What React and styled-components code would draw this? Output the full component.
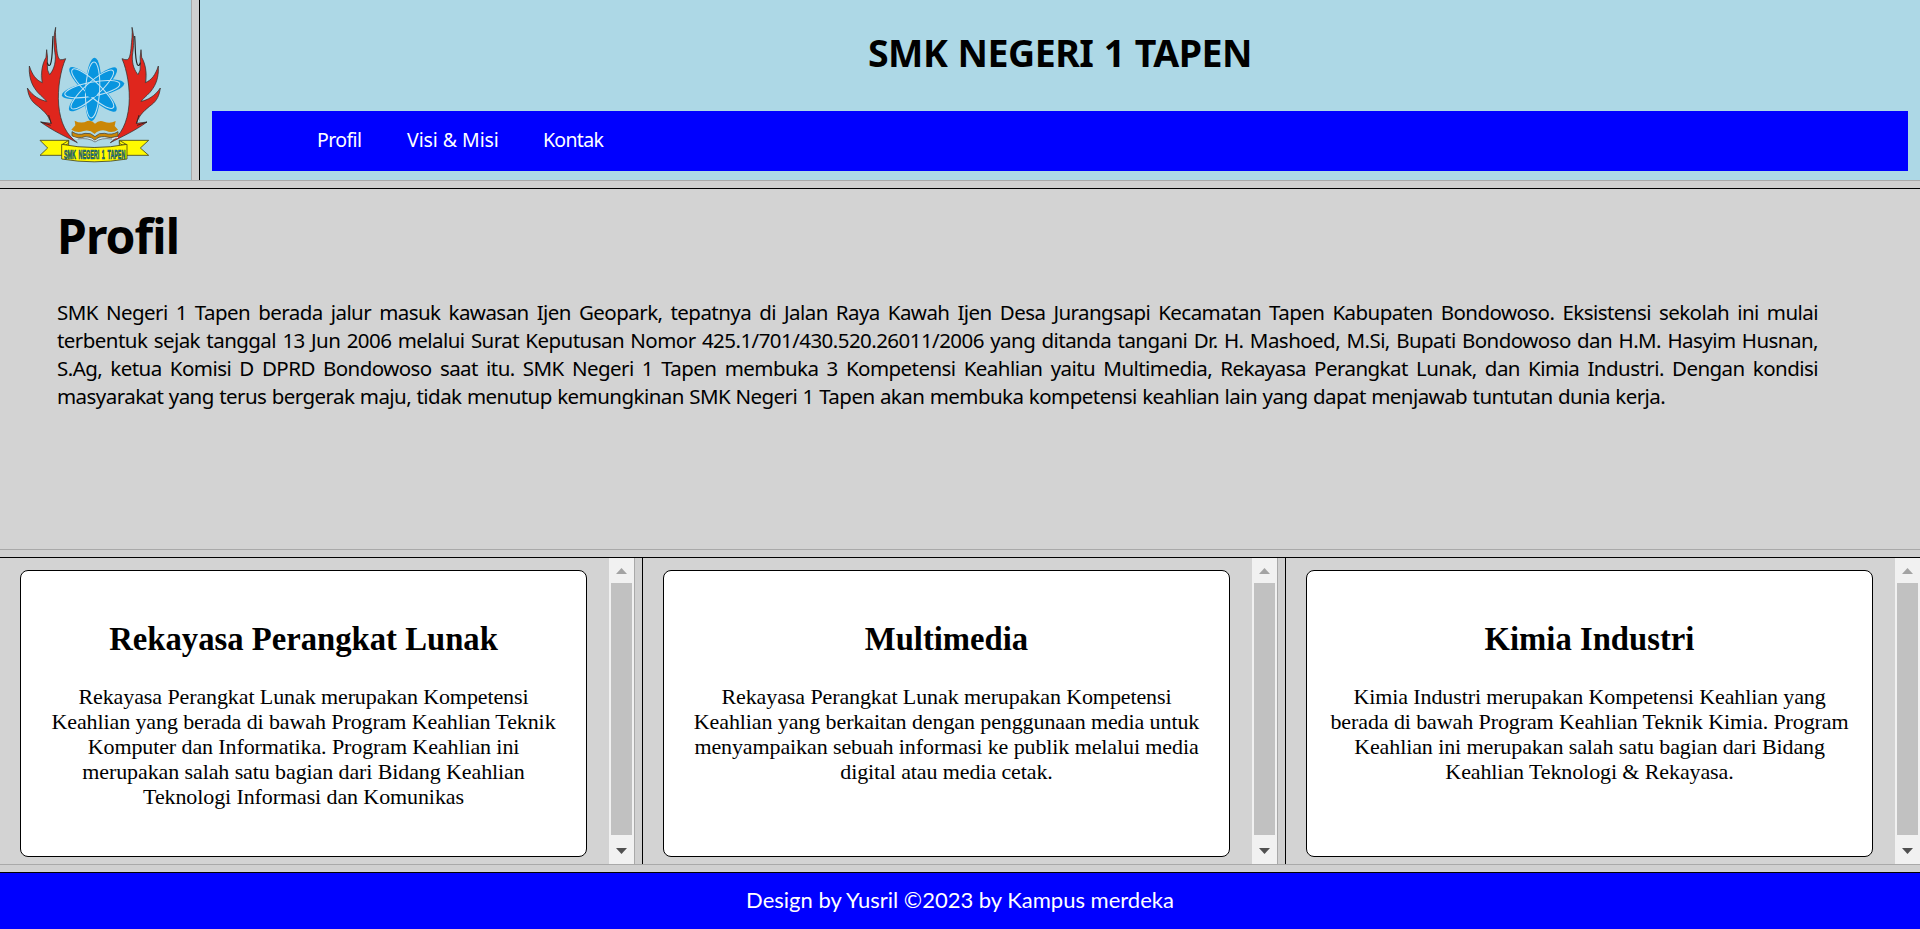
import React from "react";
import styled, { createGlobalStyle } from "styled-components";

const GlobalStyle = createGlobalStyle`
  * { box-sizing: border-box; }
  html, body, #root { height: 100%; margin: 0; }
  body { overflow: hidden; background: #d3d3d3; color: #000; }
`;

const Page = styled.div`
  display: grid;
  grid-template-rows: 180px 9px 360px 9px 306px 9px 56px;
  height: 929px;
  width: 1920px;
`;

const RowDivider = styled.div`
  background: #d0d0d0;
  border-top: 1px solid #a9a9a9;
  border-bottom: 1px solid #000;
`;

const ColumnDivider = styled.div`
  background: #d0d0d0;
  border-left: 1px solid #a9a9a9;
  border-right: 1px solid #000;
`;

const Header = styled.header`
  display: grid;
  grid-template-columns: 191px 9px 1fr;
  background: #add8e6;
`;

const LogoPane = styled.div`
  padding: 20px;
`;

const Logo = styled.svg`
  display: block;
  width: 146px;
  height: 146px;
  overflow: visible;
`;

const Banner = styled.div`
  display: flex;
  flex-direction: column;
  padding: 26px 12px 0;
`;

const SchoolName = styled.h1`
  margin: 0;
  height: 85px;
  text-align: center;
  font: 700 37.5px/54px "Noto Sans", "Open Sans", sans-serif;
  white-space: nowrap;
  letter-spacing: -0.5px;
  word-spacing: 1px;
`;

const Nav = styled.nav`
  display: flex;
  gap: 45px;
  height: 60px;
  padding-left: 105px;
  background: #00f;
`;

const NavLink = styled.a`
  width: ${(p) => p.$width}px;
  color: #fff;
  font: 400 19.5px/58px "Noto Sans", "Open Sans", sans-serif;
  letter-spacing: ${(p) => p.$tracking}px;
  white-space: nowrap;
`;

const Profile = styled.main`
  padding: 15px 102px 0 57px;
  font-family: "Noto Sans", "Open Sans", sans-serif;
`;

const ProfileTitle = styled.h2`
  margin: 0;
  font-size: 48px;
  line-height: 64px;
  letter-spacing: -0.9px;
`;

const ProfileText = styled.p`
  margin: 30px 0 0;
  font-size: 20.5px;
  line-height: 28px;
  letter-spacing: -0.55px;
  word-spacing: 0.6px;
`;

const Line = styled.span`
  display: block;
  white-space: nowrap;
  text-align-last: ${(p) => (p.$last ? "left" : "justify")};
`;

const Programs = styled.section`
  display: grid;
  grid-template-columns: 634px 9px 634px 9px 634px;
`;

const ProgramPane = styled.div`
  display: flex;
  justify-content: space-between;
  padding-left: 20px;
`;

const Card = styled.article`
  width: 567px;
  height: 287px;
  margin-top: 12px;
  padding: 49px 0 0;
  border: 1px solid #000;
  border-radius: 8px;
  background: #fff;
  text-align: center;
  font-family: "Liberation Serif", serif;
`;

const CardTitle = styled.h2`
  margin: 0 0 26px;
  font-size: 32.7px;
  line-height: 38px;
`;

const CardText = styled.p`
  margin: 0;
  font-size: 22px;
  line-height: 25px;
  letter-spacing: -0.1px;
`;

const CardLine = styled.span`
  display: block;
  white-space: nowrap;
`;

const Scrollbar = styled.div`
  display: flex;
  flex-direction: column;
  align-items: center;
  width: 25px;
  background: #f1f1f1;
`;

const ScrollButton = styled.svg`
  display: block;
  width: 25px;
  height: ${(p) => p.$height}px;
  fill: ${(p) => (p.$disabled ? "#a3a3a3" : "#505050")};
`;

const Thumb = styled.div`
  width: 21px;
  height: 252px;
  background: #c1c1c1;
`;

const Footer = styled.footer`
  background: #00f;
  color: #fff;
  text-align: center;
  font: 400 22px/54px Lato, sans-serif;
`;

const profileLines = [
  "SMK Negeri 1 Tapen berada jalur masuk kawasan Ijen Geopark, tepatnya di Jalan Raya Kawah Ijen Desa Jurangsapi Kecamatan Tapen Kabupaten Bondowoso. Eksistensi sekolah ini mulai",
  "terbentuk sejak tanggal 13 Jun 2006 melalui Surat Keputusan Nomor 425.1/701/430.520.26011/2006 yang ditanda tangani Dr. H. Mashoed, M.Si, Bupati Bondowoso dan H.M. Hasyim Husnan,",
  "S.Ag, ketua Komisi D DPRD Bondowoso saat itu. SMK Negeri 1 Tapen membuka 3 Kompetensi Keahlian yaitu Multimedia, Rekayasa Perangkat Lunak, dan Kimia Industri. Dengan kondisi",
  "masyarakat yang terus bergerak maju, tidak menutup kemungkinan SMK Negeri 1 Tapen akan membuka kompetensi keahlian lain yang dapat menjawab tuntutan dunia kerja.",
];

const programs = [
  {
    title: "Rekayasa Perangkat Lunak",
    lines: [
      "Rekayasa Perangkat Lunak merupakan Kompetensi",
      "Keahlian yang berada di bawah Program Keahlian Teknik",
      "Komputer dan Informatika. Program Keahlian ini",
      "merupakan salah satu bagian dari Bidang Keahlian",
      "Teknologi Informasi dan Komunikas",
    ],
  },
  {
    title: "Multimedia",
    lines: [
      "Rekayasa Perangkat Lunak merupakan Kompetensi",
      "Keahlian yang berkaitan dengan penggunaan media untuk",
      "menyampaikan sebuah informasi ke publik melalui media",
      "digital atau media cetak.",
    ],
  },
  {
    title: "Kimia Industri",
    lines: [
      "Kimia Industri merupakan Kompetensi Keahlian yang",
      "berada di bawah Program Keahlian Teknik Kimia. Program",
      "Keahlian ini merupakan salah satu bagian dari Bidang",
      "Keahlian Teknologi & Rekayasa.",
    ],
  },
];

const Flame = () => (
  <g strokeLinejoin="round">
    <path
      d="M73 130 L63 165 L64 195 M27 152 L36 185 L60 222 M25 216 L48 246 L82 270 M30 228 L58 262 L86 285 L84 304"
      fill="none" stroke="#8f9da3" strokeWidth="1.8"
    />
    <path
      d="M107 22 C105 42 108 62 110 85 C112 108 116 117 121 119 Q128 120 137 116 C122 150 112 205 116 255 C121 310 140 345 172 368 C139 351 99 333 62 306 L93 310 C87 285 66 268 48 254 C31 241 25 225 22 204 C39 229 60 240 80 244 C70 231 54 222 44 205 C30 184 27 161 28 138 C37 165 48 180 67 188 C62 158 66 133 78 112 L80 89 Q84 112 82 132 Q80 152 89 164 C99 152 107 134 106 108 C102 80 99 54 107 22Z"
      fill="#df261d" stroke="#30302f" strokeWidth="2.2"
    />
    <path d="M99 48 C96 82 99 112 91 134 Q85 141 82 128" fill="none" stroke="#222" strokeWidth="3.5" />
    <path d="M62 306 L92 316 M86 285 L94 311" fill="none" stroke="#222" strokeWidth="2.5" />
  </g>
);

const orbitAngles = [3, 48, 79, 133];

const SchoolLogo = () => (
  <Logo viewBox="0 0 438 438" role="img" aria-label="SMK Negeri 1 Tapen">
    <Flame />
    <g transform="translate(443 0) scale(-1 1)">
      <Flame />
    </g>
    <g transform="translate(219 208)">
      {orbitAngles.map((a) => (
        <ellipse key={a} rx="24" ry="95" transform={`rotate(${a})`} fill="#0895df" />
      ))}
      {orbitAngles.map((a) => (
        <ellipse key={a} cx="-1" cy="2" rx="21" ry="84" transform={`rotate(${a})`} fill="none" stroke="#bfe2f3" strokeWidth="3.2" />
      ))}
      <circle cx="-4" cy="4" r="20" fill="#0895df" />
    </g>
    <path
      d="M164 302 Q184 313 202 303 Q216 300 225 311 Q237 299 252 305 Q270 312 287 303 L284 318 L294 329 Q276 342 258 332 Q237 328 224 342 Q209 328 191 333 Q171 340 154 329 L166 316Z"
      fill="#ca8707"
    />
    <path
      d="M156 335 Q175 348 195 340 Q213 337 225 350 Q237 337 254 340 Q276 347 294 335 V348 Q272 357 253 350 Q235 348 225 361 Q211 348 195 350 Q173 358 156 347Z"
      fill="#ca8707" stroke="#4c4a40" strokeWidth="2.5"
    />
    <path d="M157 352 Q177 361 199 354 Q216 354 225 364 Q238 353 255 354 Q275 360 294 352" fill="none" stroke="#e6eef0" strokeWidth="3" />
    <path d="M173 357 Q205 352 225 366 Q244 352 276 357" fill="none" stroke="#555" strokeWidth="2" />
    <g fill="#fffa00" stroke="#45451b" strokeWidth="2.5">
      <path d="M60 361 H146 V406 H60 L83 384Z" />
      <path d="M386 361 H298 V406 H386 L361 384Z" />
      <path d="M146 361 L126 374 Q148 379 146 361Z" />
      <path d="M298 361 L320 374 Q296 379 298 361Z" />
      <path d="M125 373 Q222 392 321 373 V417 Q222 434 125 417Z" />
    </g>
    <text
      x="132" y="417" textLength="184" lengthAdjust="spacingAndGlyphs"
      fontFamily="Liberation Sans, sans-serif" fontWeight="700" fontSize="37"
      wordSpacing="8" fill="#087da9" stroke="#2b4a38" strokeWidth="2"
    >
      SMK NEGERI 1 TAPEN
    </text>
  </Logo>
);

const VerticalScrollbar = () => (
  <Scrollbar>
    <ScrollButton $height={25} $disabled viewBox="0 0 25 25">
      <path d="M7 16 L12.5 10 L18 16Z" />
    </ScrollButton>
    <Thumb />
    <ScrollButton $height={29} viewBox="0 0 25 29">
      <path d="M7 13 L12.5 19 L18 13Z" />
    </ScrollButton>
  </Scrollbar>
);

const Program = ({ title, lines }) => (
  <ProgramPane>
    <Card>
      <CardTitle>{title}</CardTitle>
      <CardText>
        {lines.map((line) => (
          <CardLine key={line}>{line} </CardLine>
        ))}
      </CardText>
    </Card>
    <VerticalScrollbar />
  </ProgramPane>
);

export default function App() {
  return (
    <Page>
      <GlobalStyle />
      <Header>
        <LogoPane>
          <SchoolLogo />
        </LogoPane>
        <ColumnDivider />
        <Banner>
          <SchoolName>SMK NEGERI 1 TAPEN</SchoolName>
          <Nav>
            <NavLink $width={45} $tracking={-0.6}>Profil</NavLink>
            <NavLink $width={91} $tracking={-0.07}>Visi &amp; Misi</NavLink>
            <NavLink $width={61} $tracking={-0.7}>Kontak</NavLink>
          </Nav>
        </Banner>
      </Header>
      <RowDivider />
      <Profile>
        <ProfileTitle>Profil</ProfileTitle>
        <ProfileText>
          {profileLines.map((line, i) => (
            <Line key={line} $last={i === profileLines.length - 1}>{line} </Line>
          ))}
        </ProfileText>
      </Profile>
      <RowDivider />
      <Programs>
        <Program {...programs[0]} />
        <ColumnDivider />
        <Program {...programs[1]} />
        <ColumnDivider />
        <Program {...programs[2]} />
      </Programs>
      <RowDivider />
      <Footer>Design by Yusril ©2023 by Kampus merdeka</Footer>
    </Page>
  );
}
